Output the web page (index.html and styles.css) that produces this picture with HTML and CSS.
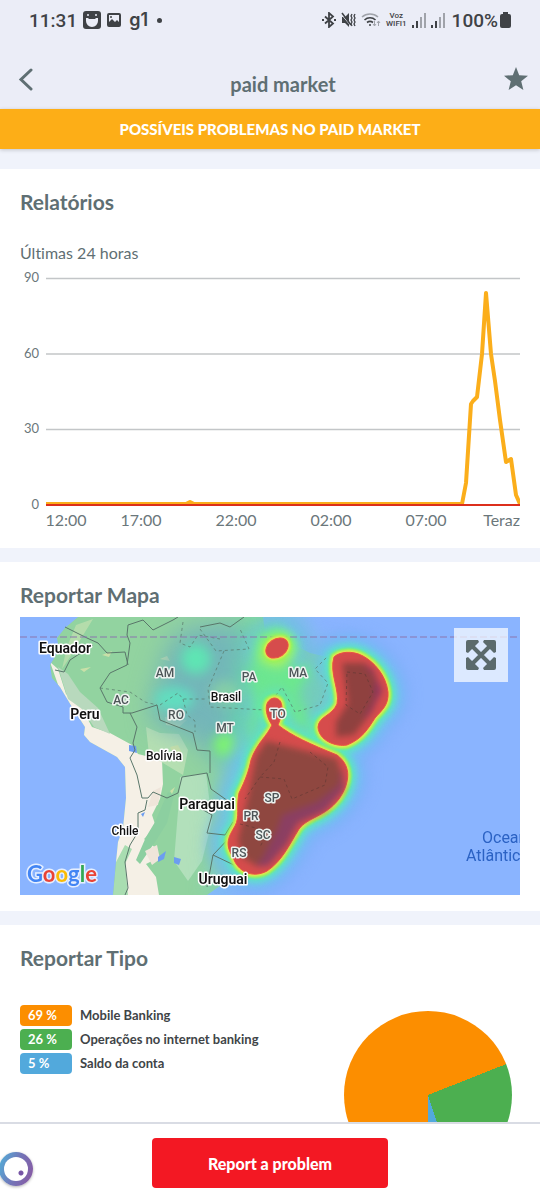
FILE: index.html
```html
<!DOCTYPE html>
<html lang="pt">
<head>
  <meta charset="UTF-8">
  <meta name="viewport" content="width=device-width, initial-scale=1.0">
  <title>paid market</title>
  <link rel="stylesheet" href="styles.css">
</head>
<body>

  <header class="header">
    <div class="status-bar">
      <span class="clock">11:31</span>
      <svg width="18" height="18" viewBox="0 0 18 18">
        <rect width="18" height="18" rx="3" fill="#3f4246"/>
        <path d="M3 7h2l1 1h6l1-1h2v3a6 6 0 0 1-12 0z" fill="#ebedf7"/>
        <circle cx="5" cy="4" r="1" fill="#ebedf7"/>
        <circle cx="13" cy="4" r="1" fill="#ebedf7"/>
      </svg>
      <svg width="14" height="14" viewBox="0 0 14 14">
        <rect x="1" y="1" width="12" height="12" rx="1" fill="none" stroke="#3f4246" stroke-width="2"/>
        <path d="M1 10l4-4 3 3 2-2 3 3v3H1z" fill="#3f4246"/>
        <circle cx="4" cy="4" r="1" fill="#3f4246"/>
      </svg>
      <span class="g1">g1</span>
      <span class="dot"></span>

      <div class="status-right">
        <svg width="14" height="16" viewBox="0 0 14 16" fill="none" stroke="#3f4246" stroke-width="1.8">
          <path d="M3 4.500l8 7-4 3.500V1l4 3.500-8 7"/>
          <path d="M0 8h2M12 8h2"/>
        </svg>
        <svg width="15" height="16" viewBox="0 0 15 16">
          <path d="M1 5h3l4-4v14l-4-4H1z" fill="#3f4246"/>
          <path d="M0 2l10 12" stroke="#ebedf7" stroke-width="1"/>
          <path d="M1 1l9 12" stroke="#3f4246" stroke-width="1.5"/>
          <path d="M11 2l-1 2 1 2-1 2 1 2-1 2 1 2M14 2l-1 2 1 2-1 2 1 2-1 2 1 2" fill="none" stroke="#3f4246" stroke-width="1.3"/>
        </svg>
        <svg width="20" height="16" viewBox="0 0 20 16" fill="none" stroke-width="1.6">
          <path d="M1 5a12 12 0 0 1 16 0" stroke="#a0a3aa"/>
          <path d="M3.500 8a8 8 0 0 1 11 0M6 10.500a5 5 0 0 1 6 0" stroke="#3f4246"/>
          <circle cx="9" cy="13" r="1" fill="#3f4246"/>
          <path d="M13.500 9v5m-1.500-2l1.500 2 1.500-2M17.500 14V9m-1.500 2l1.500-2 1.500 2" stroke="#a0a3aa" stroke-width="1"/>
        </svg>
        <span class="carrier">Voz<br>WIFI1</span>
        <svg width="14" height="15" viewBox="0 0 14 15">
          <path d="M0 12h2v3H0zM4 8h2v7H4z" fill="#3f4246"/>
          <path d="M8 4h2v11H8zM12 0h2v15h-2z" fill="#a0a3aa"/>
        </svg>
        <svg width="14" height="15" viewBox="0 0 14 15">
          <path d="M0 12h2v3H0zM4 8h2v7H4z" fill="#3f4246"/>
          <path d="M8 4h2v11H8zM12 0h2v15h-2z" fill="#a0a3aa"/>
        </svg>
        <span class="battery">100%</span>
        <svg width="11" height="16" viewBox="0 0 11 16">
          <path d="M3 0h5v2h1a2 2 0 0 1 2 2v10a2 2 0 0 1-2 2H2a2 2 0 0 1-2-2V4a2 2 0 0 1 2-2h1z" fill="#3f4246"/>
        </svg>
      </div>
    </div>

    <div class="nav">
      <button class="icon-btn" aria-label="Voltar">
        <svg width="24" height="24" viewBox="0 0 24 24"><path d="M17 3L7 12.500 17 22" fill="none" stroke="#5f6f73" stroke-width="3" stroke-linecap="round"/></svg>
      </button>
      <h1>paid market</h1>
      <button class="icon-btn" aria-label="Favorito">
        <svg width="24" height="24" viewBox="0 0 24 24"><path d="M12 0l3.200 8.200 8.800.5-6.800 5.600 2.200 8.700-7.400-4.800L4.600 23l2.200-8.700L0 8.700l8.800-.5z" fill="#5f6f73"/></svg>
      </button>
    </div>
  </header>

  <div class="banner">POSSÍVEIS PROBLEMAS NO PAID MARKET</div>

  <main class="content">
    <section class="card">
      <h2>Relatórios</h2>
      <p class="subtitle">Últimas 24 horas</p>
      <svg class="chart" viewBox="0 0 500 269">
        <path d="M26 15.500h474M26 91h474M26 166.500h474" stroke="#c3c6c8" stroke-width="1.4"/>
        <g class="axis-y">
          <text x="19" y="19">90</text>
          <text x="19" y="95">60</text>
          <text x="19" y="170">30</text>
          <text x="19" y="246">0</text>
        </g>
        <polyline class="line" points="26,241 166,241 170,239 174,241 442,241 446,220 451,141 453,138 457,134 462,91 466,30 471,91 475,118 480,157 486,199 491,196 496,232 500,241"/>
        <path d="M26 242h474" stroke="#dc2f1c" stroke-width="2"/>
        <g class="axis-x">
          <text x="46" y="263">12:00</text>
          <text x="121" y="263">17:00</text>
          <text x="216" y="263">22:00</text>
          <text x="311" y="263">02:00</text>
          <text x="406" y="263">07:00</text>
          <text x="500" y="263" class="last">Teraz</text>
        </g>
      </svg>
    </section>

    <section class="card">
      <h2>Reportar Mapa</h2>
      <div class="map">
        <svg viewBox="0 0 500 278">
          <defs>
            <filter id="b1" x="-50%" y="-50%" width="200%" height="200%"><feGaussianBlur stdDeviation="1"/></filter>
            <filter id="b3" x="-50%" y="-50%" width="200%" height="200%"><feGaussianBlur stdDeviation="3"/></filter>
            <filter id="b6" x="-50%" y="-50%" width="200%" height="200%"><feGaussianBlur stdDeviation="6"/></filter>
            <filter id="b12" x="-80%" y="-80%" width="260%" height="260%"><feGaussianBlur stdDeviation="12"/></filter>
            <path id="land" d="M58 0L45 11 37 21 39 32 33 43 30 48 32 61 40 70 52 90 65 110 64 118 70 125 97 140 105 150 106 181 103 211 98 225 96 245 93 278H187L197 271 233 251 247 241 257 211 260 198 297 185 317 168 327 151 325 130 333 108 353 85 357 62 345 52 327 46 307 40 290 36 270 26 240 26 245 16 243 0z"/>
            <clipPath id="land-clip"><use href="#land"/></clipPath>
            <g id="hot">
              <ellipse cx="257" cy="31" rx="12" ry="9" transform="rotate(-35 257 31)"/>
              <path d="M252 108C245 98 243 83 254 81C265 81 263 97 258 108C272 119 290 127 317 138C332 149 330 166 319 182C305 200 288 200 279 212C268 230 262 244 247 254C232 262 217 254 213 240C204 227 209 219 215 209C220 200 216 190 219 176C226 162 229 153 231 143C237 126 247 119 252 108z"/>
              <path d="M314 40C319 35 332 33 343 39C354 45 366 58 368 75C369 88 362 93 355 101C348 112 342 122 327 128C316 130 299 124 298 110C299 99 312 99 317 87C320 73 309 56 314 40z"/>
            </g>
          </defs>

          <rect width="500" height="278" fill="#8ab4ff"/>
          <use href="#land" fill="#92d3a0"/>
          <g clip-path="url(#land-clip)">
            <!-- andes -->
            <path d="M30 45L38 52 46 77 60 88 72 110 90 116 112 128 118 137 142 143 143 167 140 182 132 198 136 210 124 222 137 232 136 242 126 247 136 260 139 278H105L96 245 85 180 60 130z" fill="#f5f0e6"/>
            <path d="M93 278L96 245 105 228 112 232 105 247 108 278z" fill="#a9ddb1"/>
            <path d="M38 50l10 7 12 18 18 16 12 26-16-7-12-18-14-10z" fill="#b8d9bd"/>
            <path d="M56 8L73 2 62 20 50 40 42 52 47 30z" fill="#bddfae" opacity=".8"/>
            <path d="M126 110l14 6 19 1 9 16-5 25-20-12-14-8z" fill="#b5dfb2"/>
            <path d="M160 160l26-4 6 48-10 40-14 20-14-20 4-50z" fill="#b2e0bb"/>
            <path d="M135 205l13-30 6 3-7 28-10 16-17 25-4-4 10-23z" fill="#8ccfa0"/>
            <path d="M128 190l5-16 8-4-3 18zM125 234l12-6 3 14-8 6z" fill="#efe5da"/>
            <path d="M150 130l8-2 4 8-7 4zM82 38l10-4-3 6zM60 52l11-2-7 5zM140 42l7-3 3 5zM150 174l5-4-3 7zM145 100l22 3-8 7-13-2z" fill="#c9e0a8"/>
            <path d="M109 128l7 1 1 7-8-2zM138 240l8-6-2 8-6 3zM154 240l7 2-2 6-5-2zM121 197l4-2-2 5z" fill="#6c9df0"/>
          </g>

          <!-- heat, cold to hot -->
          <g filter="url(#b12)">
            <path d="M150 25L170 10 225 5 235 130 200 150 178 125 130 105 135 70z" fill="#6fb0bd" opacity=".85"/>
            <path d="M225 0L275 -2 290 40 318 30 325 130 260 125 235 150 205 145 220 60z" fill="#5ce6a6" opacity=".7"/>
            <path d="M215 120L235 130 215 200 208 278H192L200 180z" fill="#66d4d6" opacity=".7"/>
          </g>
          <g filter="url(#b6)">
            <circle cx="176" cy="42" r="15" fill="#5ceab2" opacity=".9"/>
            <ellipse cx="154" cy="82" rx="20" ry="12" fill="#5ee2c0" opacity=".9"/>
            <circle cx="205" cy="128" r="12" fill="#7df56d" opacity=".95"/>
            <use href="#hot" fill="none" stroke="#7aa8f5" stroke-width="46" opacity=".45"/>
            <use href="#hot" fill="none" stroke="#68c9ee" stroke-width="28" opacity=".75"/>
          </g>
          <g filter="url(#b3)">
            <use href="#hot" fill="none" stroke="#5aecba" stroke-width="16" opacity=".85"/>
          </g>
          <g filter="url(#b6)">
            <path d="M230 42L236 16 258 8 280 28 270 50 290 54 288 100 300 120 272 108 262 74 246 78 238 112 222 140 232 90z" fill="#6bf07c" opacity=".75"/>
            <path d="M240 44l4-22 24-6 6 20-14 14z" fill="#d0f04a" opacity=".8"/>
            <ellipse cx="293" cy="76" rx="14" ry="18" fill="#74cbbd" opacity=".9"/>
            <ellipse cx="205" cy="76" rx="14" ry="12" fill="#8fd7a0" opacity=".7"/>
          </g>

          <!-- borders -->
          <g fill="none" stroke="#59766a" stroke-width="1" stroke-linejoin="round">
            <path d="M45 10L67 21 78 26 87 36 105 35 108 48M35 53L44 55 50 43 73 28M107 48L90 56 80 71 87 85 103 90V96H112L137 88 140 103 173 116 177 133 190 134V156M107 48L110 26 107 18 108 8 123 3 133 13 153 3 158 0M110 96L117 110 113 126 115 133 110 141 117 158 122 181H128L133 175 147 181 158 176 162 160 187 156 191 172 208 184M127 183L125 193 118 196V215L110 228 105 245 108 271 105 278M178 190L192 198 187 216 205 218 213 205M187 270L193 238 212 218M193 238L214 248M180 10L200 6 210 10 224 0"/>
            <path d="M80 71L110 75 125 85 137 88M163 5L160 26 170 30 178 18 200 22M140 88L158 76 163 82H187M163 82L167 98 175 104V115M204 34L188 72 190 90 245 93M180 12L196 34 229 32 220 12M245 93L262 70 275 95 300 88 308 66 295 52 307 40" stroke-dasharray="3 3" opacity=".7"/>
          </g>
          <path d="M0 20H500" stroke="#8b74ae" stroke-width="1" stroke-dasharray="7 3"/>

          <use href="#hot" fill="none" stroke="#8df45a" stroke-width="8" filter="url(#b1)"/>
          <use href="#hot" fill="#dc5048" stroke="#f0e650" stroke-width="4" filter="url(#b1)"/>
          <use href="#hot" fill="#d64c4c" stroke="#e95443" stroke-width="1"/>
          <g filter="url(#b3)">
            <path d="M246 124L317 142 323 164 297 188 276 202 258 236 238 250 222 240 218 222 228 180 236 140z" fill="#8f4740"/>
            <path d="M322 148L319 168 297 185 262 198 257 213 243 240 235 249 248 249 267 227 278 206 305 194 324 172z" fill="#8b3f62"/>
            <path d="M322 46L345 46 361 70 353 93 334 118 316 120 316 105 328 86z" fill="#8f413f"/>
            <path d="M342 46L355 60 354 82 342 104 350 97 362 74 353 52z" fill="#8c365f"/>
          </g>
          <path d="M327 55L345 57 353 75 340 97 326 88zM260 125L254 145 240 160 225 182M290 135L308 150 305 168 272 182 264 162 240 160M220 207L248 214 240 230" fill="none" stroke="#5e3732" stroke-width="1" stroke-dasharray="3 3" opacity=".6"/>

          <g class="country">
            <text x="45" y="36">Equador</text>
            <text x="65" y="102">Peru</text>
            <text x="187" y="192">Paraguai</text>
            <text x="203" y="267">Uruguai</text>
          </g>
          <g class="country small">
            <text x="206" y="84">Brasil</text>
            <text x="144" y="143">Bolívia</text>
            <text x="105" y="218">Chile</text>
          </g>
          <g class="state">
            <text x="145" y="60">AM</text>
            <text x="101" y="87">AC</text>
            <text x="156" y="102">RO</text>
            <text x="229" y="64">PA</text>
            <text x="278" y="60">MA</text>
            <text x="258" y="101">TO</text>
            <text x="205" y="115">MT</text>
            <text x="252" y="185">SP</text>
            <text x="231" y="203">PR</text>
            <text x="243" y="222">SC</text>
            <text x="219" y="240">RS</text>
          </g>
          <g class="ocean">
            <text x="462" y="226">Oceano</text>
            <text x="446" y="244">Atlântico</text>
          </g>
          <text class="google" x="7" y="265"><tspan fill="#4285f4">G</tspan><tspan fill="#ea4335">o</tspan><tspan fill="#fbbc05">o</tspan><tspan fill="#4285f4">g</tspan><tspan fill="#34a853">l</tspan><tspan fill="#ea4335">e</tspan></text>
        </svg>
        <button class="expand" aria-label="Expandir mapa">
          <svg width="30" height="30" viewBox="0 0 30 30">
            <path d="M6 6l18 18M24 6L6 24" stroke="#5b6a6c" stroke-width="4"/>
            <path d="M2 0h10l1 2-3 3-5 5-3 3-2-1V2a2 2 0 0 1 2-2zM28 0H18l-1 2 3 3 5 5 3 3 2-1V2a2 2 0 0 0-2-2zM2 30h10l1-2-3-3-5-5-3-3-2 1v10a2 2 0 0 0 2 2zM28 30H18l-1-2 3-3 5-5 3-3 2 1v10a2 2 0 0 1-2 2z" fill="#5b6a6c"/>
          </svg>
        </button>
      </div>
    </section>

    <section class="card">
      <h2>Reportar Tipo</h2>
      <div class="types">
        <ul class="legend">
          <li><span class="pill orange">69 %</span>Mobile Banking</li>
          <li><span class="pill green">26 %</span>Operações no internet banking</li>
          <li><span class="pill blue">5 %</span>Saldo da conta</li>
        </ul>
        <div class="pie"></div>
      </div>
    </section>
  </main>

  <footer class="footer">
    <button class="report-btn">Report a problem</button>
    <div class="assist"></div>
  </footer>

</body>
</html>
```
FILE: styles.css
```css
* {
  box-sizing: border-box;
}

body {
  margin: 0;
  height: 100vh;
  display: flex;
  flex-direction: column;
  overflow: hidden;
  background-color: #f0f3fb;
  color: #5f6f73;
  font-family: "Proxima Nova", Lato, sans-serif;
  font-variant-ligatures: none;
}

h1, h2, p, ul {
  margin: 0;
  padding: 0;
}

button {
  border: none;
  cursor: pointer;
  font-family: inherit;
}

svg {
  display: block;
  flex-shrink: 0;
}

.header {
  background-color: #ebedf7;
}

.status-bar {
  display: flex;
  align-items: center;
  gap: 6px;
  height: 40px;
  padding: 0 29px;
  color: #3f4246;
  font-family: Roboto, sans-serif;
  font-size: 19px;
  font-weight: 500;
}

.g1 {
  margin-left: 2px;
  font-family: Inter, sans-serif;
  font-size: 18px;
  font-weight: 600;
  line-height: 20px;
}

.dot {
  width: 5px;
  height: 5px;
  margin-left: 3px;
  border-radius: 50%;
  background-color: #3f4246;
}

.status-right {
  display: flex;
  align-items: center;
  gap: 5px;
  margin-left: auto;
}

.carrier {
  font-size: 8px;
  line-height: 8px;
  text-align: center;
}

.battery {
  margin: 0 -3px 0 2px;
}

.nav {
  display: flex;
  align-items: center;
  height: 69px;
  padding: 0 12px 0 14px;
}

h1 {
  flex: 1;
  padding: 18px 0 0 24px;
  font-size: 20px;
  line-height: 24px;
  text-align: center;
}

.icon-btn {
  margin-top: 8px;
  padding: 0;
  background: none;
}

.banner {
  position: relative;
  background-color: #fdae17;
  color: #fff;
  font-size: 15px;
  font-weight: 900;
  line-height: 40px;
  text-align: center;
  box-shadow: 0 1px 4px rgba(0, 0, 0, 0.2);
}

.content {
  flex: 1;
  min-height: 0;
  padding-top: 20px;
  overflow-y: auto;
  scrollbar-width: none;
}

.card {
  margin-bottom: 14px;
  padding: 20px 20px 16px;
  background-color: #fff;
}

h2 {
  font-size: 21px;
  line-height: 26px;
}

.subtitle {
  margin-top: 28px;
  font-size: 16px;
  line-height: 20px;
}

.chart {
  width: 100%;
}

.chart text {
  fill: #6b777b;
}

.axis-y {
  font-size: 13px;
  text-anchor: end;
}

.axis-x {
  font-size: 16px;
  text-anchor: middle;
}

.axis-x .last {
  text-anchor: end;
}

.line {
  fill: none;
  stroke: #fbae1b;
  stroke-width: 4;
  stroke-linejoin: round;
}

.map {
  position: relative;
  margin-top: 9px;
  font-family: Roboto, sans-serif;
}

.map > svg {
  width: 100%;
}

.map feGaussianBlur {
  color-interpolation-filters: sRGB;
}

.country, .state {
  fill: #111;
  stroke: #fff;
  stroke-width: 3;
  stroke-linejoin: round;
  paint-order: stroke;
  font-size: 14px;
  font-weight: 600;
  text-anchor: middle;
}

.small {
  font-size: 12px;
  font-weight: 500;
}

.state {
  fill: #4c5558;
  stroke: #eef3f0;
  font-size: 12px;
  font-weight: 500;
}

.ocean {
  fill: #2b62c4;
  font-size: 16px;
}

.google {
  stroke: #e6efff;
  stroke-width: 3;
  paint-order: stroke;
  font-family: Lato, sans-serif;
  font-size: 22px;
  font-weight: 700;
}

.expand {
  position: absolute;
  top: 11px;
  right: 12px;
  padding: 12px;
  background-color: rgba(255, 255, 255, 0.7);
}

.types {
  display: flex;
  justify-content: space-between;
  margin-top: 34px;
}

.legend {
  list-style: none;
}

.legend li {
  display: flex;
  align-items: center;
  gap: 8px;
  margin-bottom: 3px;
  color: #404447;
  font-size: 13px;
  font-weight: 700;
  line-height: 21px;
}

.pill {
  width: 52px;
  padding-left: 8px;
  border-radius: 4px;
  color: #fff;
}

.orange {
  background-color: #fc8e00;
}

.green {
  background-color: #4caf50;
}

.blue {
  background-color: #52a9dc;
}

.pie {
  flex-shrink: 0;
  width: 168px;
  height: 168px;
  margin: 6px 8px 0 0;
  border-radius: 50%;
  background: conic-gradient(from 180deg, #fc8e00 0 69%, #4caf50 69% 95%, #52a9dc 95%);
}

.footer {
  position: relative;
  display: flex;
  justify-content: center;
  padding: 14px 0 12px;
  border-top: 2px solid #d9dce4;
  background-color: #fff;
}

.report-btn {
  width: 236px;
  height: 50px;
  border-radius: 4px;
  background-color: #f31823;
  color: #fff;
  font-size: 16px;
  font-weight: 900;
}

.assist {
  position: absolute;
  left: -1px;
  bottom: 14px;
  width: 34px;
  height: 34px;
  border: 5px solid transparent;
  border-radius: 50%;
  background:
    radial-gradient(circle at 17px 16px, #7654a5 2px, transparent 3px) padding-box,
    linear-gradient(#fff, #fff) padding-box,
    linear-gradient(110deg, #4fb4dc, #7275b8 50%, #8b55a0) border-box;
  box-shadow: 0 1px 3px rgba(0, 0, 0, 0.3);
}
```
